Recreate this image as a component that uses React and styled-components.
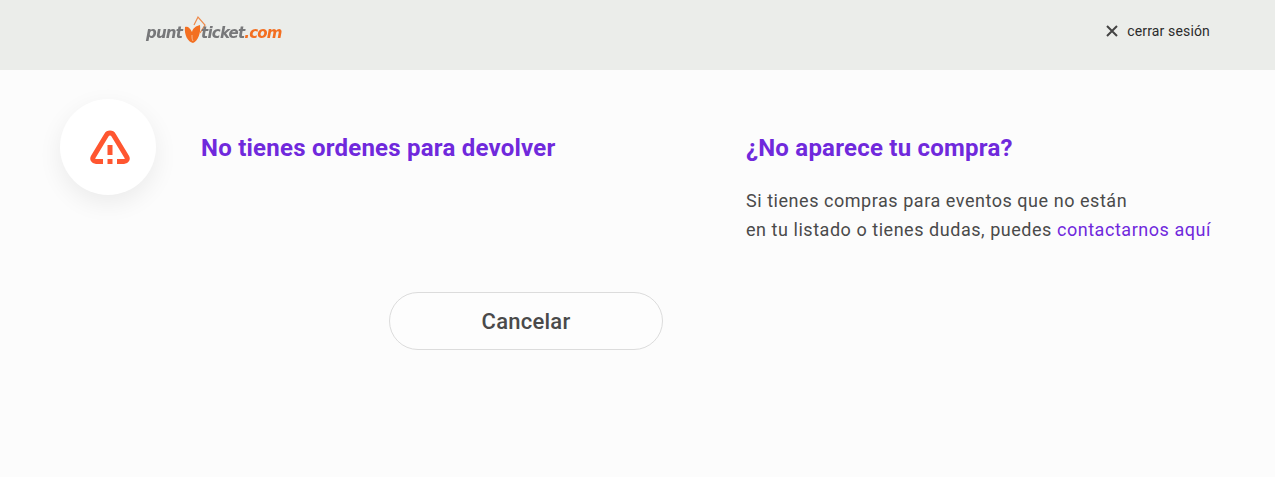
import styled, { createGlobalStyle } from 'styled-components'

const Global = createGlobalStyle`
  html, body {
    margin: 0;
    background: #fcfcfc;
    font-family: Roboto, "Liberation Sans", sans-serif;
  }
`

const Header = styled.header`
  height: 70px;
  background: #ebedea;
  display: flex;
  align-items: center;
  justify-content: space-between;
  padding: 0 65px 0 146px;
  box-sizing: border-box;
`

const Logo = styled.div`
  display: flex;
  align-items: flex-start;
  margin-top: -8px;
  font-family: "DejaVu Sans", sans-serif;
  font-style: italic;
  font-weight: 700;
  font-size: 15px;
  line-height: 16px;
  letter-spacing: -0.8px;
  filter: blur(0.35px);
`

const LogoPart = styled.span`
  color: ${(props) => props.color};
  padding-top: 11px;
`

const LogoMark = styled.svg`
  margin: 0 -5px 0 -2px;
`

const Logout = styled.a`
  display: flex;
  align-items: center;
  gap: 8px;
  font-size: 14px;
  letter-spacing: 0.15px;
  color: #2b2b2b;
  margin-top: -9px;
`

const Main = styled.main`
  display: grid;
  grid-template-columns: 686px 1fr;
  padding: 29px 60px 0;
  height: 407px;
  box-sizing: border-box;
`

const Left = styled.section`
  display: flex;
  flex-direction: column;
`

const Notice = styled.div`
  display: flex;
  gap: 45px;
  height: 193px;
`

const IconCircle = styled.div`
  width: 96px;
  height: 96px;
  border-radius: 50%;
  background: #fff;
  box-shadow: 0 8px 24px rgba(0, 0, 0, 0.07);
  display: flex;
  align-items: center;
  justify-content: center;
`

const AlertIcon = styled.svg`
  margin-left: 4px;
`

const Title = styled.h2`
  margin: 0;
  font-size: 24px;
  font-weight: 700;
  line-height: 32px;
  letter-spacing: 0.23px;
  color: #7029dc;
  padding-top: 33px;
`

const CancelRow = styled.div`
  display: flex;
  padding-left: 329px;
`

const CancelButton = styled.button`
  width: 274px;
  height: 58px;
  flex: none;
  border: 1px solid #dcdcdc;
  border-radius: 29px;
  background: #fdfdfd;
  color: #4a4a4a;
  font-family: inherit;
  font-size: 22px;
  font-weight: 500;
  letter-spacing: 0.24px;
`

const Help = styled.p`
  margin: 22px 0 0;
  font-size: 18px;
  line-height: 29px;
  letter-spacing: 0.54px;
  color: #4a4a4a;
`

const HelpLink = styled.a`
  color: #7029dc;
`

export default function App() {
  return (
    <>
      <Global />
      <Header>
        <Logo>
          <LogoPart color="#77787a">punt</LogoPart>
          <LogoMark width="26" height="34" viewBox="0 0 26 34">
            <path d="M5 13c3-1 5 1 7 5 1-4 4-6 8-7 1 8-2 16-7 18-5-1-9-8-8-16z" fill="#f36f21" />
            <path d="M12 21c0 3 0 4 1 6" stroke="#f9c9a8" strokeWidth="0.8" fill="none" />
            <path d="M14 11l4-8 7 8-5 8" stroke="#ee8a4a" strokeWidth="1.2" fill="none" />
          </LogoMark>
          <LogoPart color="#77787a">ticket</LogoPart>
          <LogoPart color="#f36f21">.com</LogoPart>
        </Logo>
        <Logout>
          <svg width="14" height="14" viewBox="0 0 14 14">
            <path d="M2 2l10 10M12 2L2 12" stroke="#444" strokeWidth="2" fill="none" />
          </svg>
          cerrar sesión
        </Logout>
      </Header>
      <Main>
        <Left>
          <Notice>
            <IconCircle>
              <AlertIcon width="40" height="36" viewBox="0 0 40 36">
                <path
                  d="M13 32.500H6c-2.500 0-4-2.500-2.800-4.600L16.500 6c1.500-2.700 5.500-2.700 7 0l13.300 21.900c1.200 2.100-.3 4.600-2.800 4.600H27"
                  stroke="#ff5630"
                  strokeWidth="5"
                  fill="none"
                />
                <path d="M20 16v10M20 30v5" stroke="#ff5630" strokeWidth="5" fill="none" />
              </AlertIcon>
            </IconCircle>
            <Title>No tienes ordenes para devolver</Title>
          </Notice>
          <CancelRow>
            <CancelButton>Cancelar</CancelButton>
          </CancelRow>
        </Left>
        <section>
          <Title>¿No aparece tu compra?</Title>
          <Help>
            Si tienes compras para eventos que no están
            <br />
            en tu listado o tienes dudas, puedes <HelpLink>contactarnos aquí</HelpLink>
          </Help>
        </section>
      </Main>
    </>
  )
}
